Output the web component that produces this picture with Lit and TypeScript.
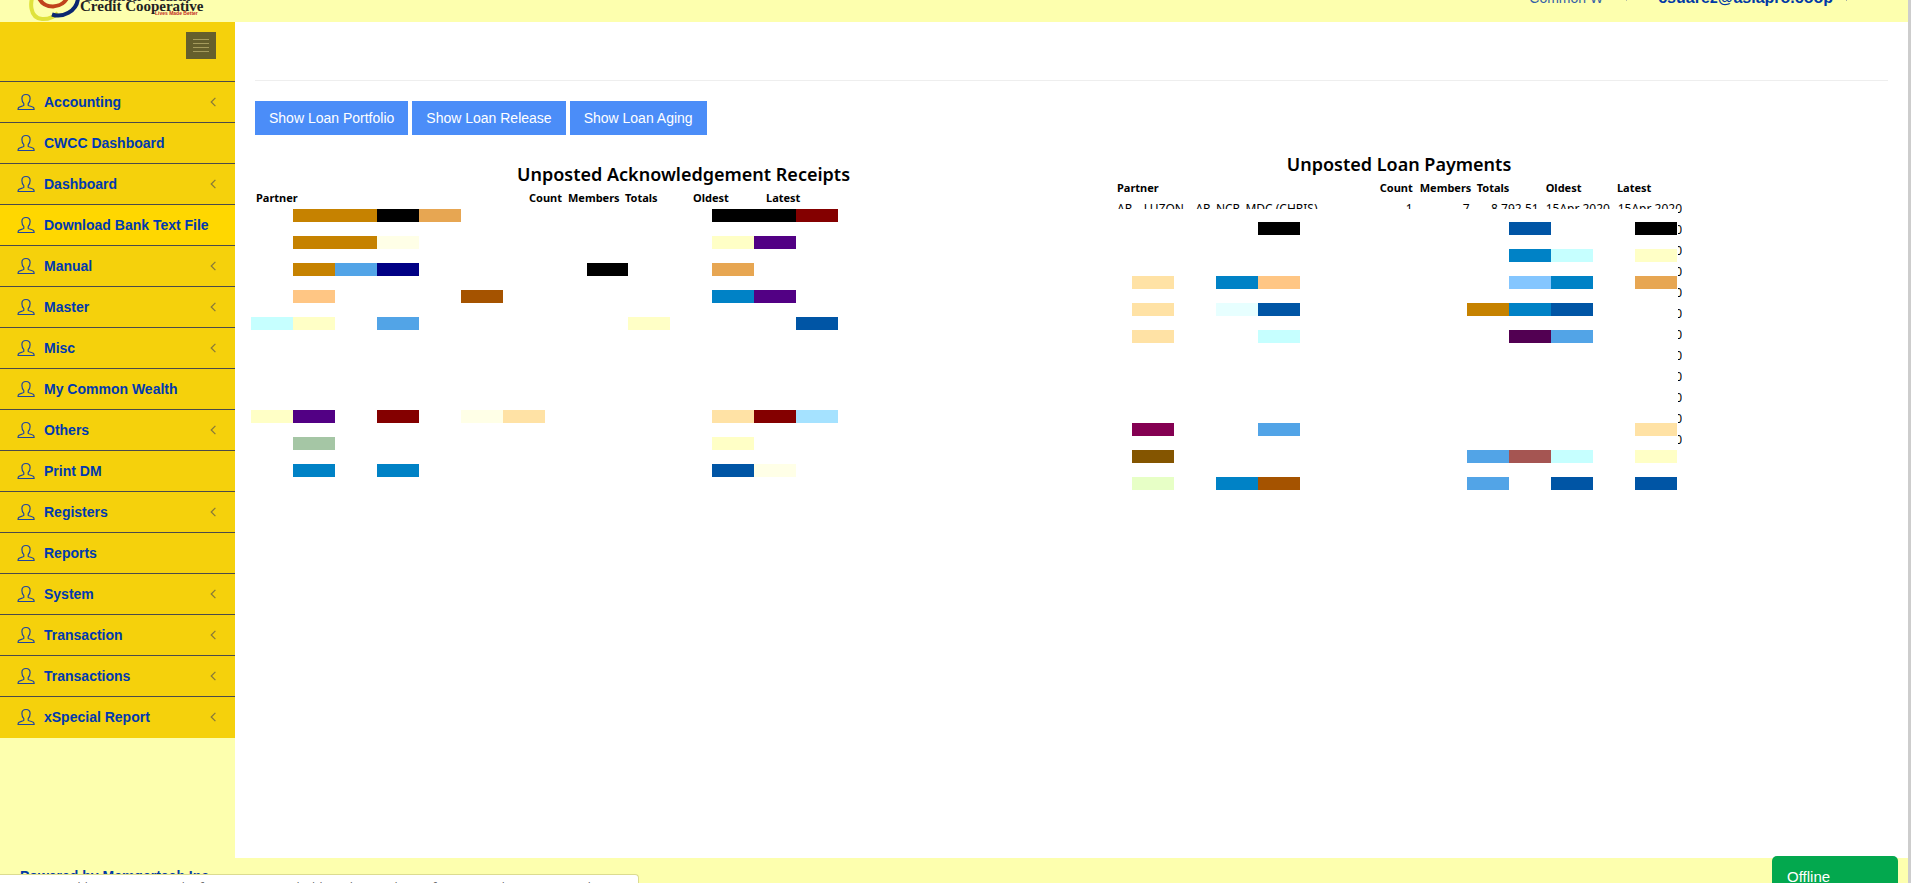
import { LitElement, html, svg, css } from "lit";
import { customElement } from "lit/decorators.js";
import { styleMap } from "lit/directives/style-map.js";

interface MenuEntry {
  label: string;
  nested?: boolean;
  active?: boolean;
}

const MENU: MenuEntry[] = [
  { label: "Accounting", nested: true },
  { label: "CWCC Dashboard" },
  { label: "Dashboard", nested: true },
  { label: "Download Bank Text File", active: true },
  { label: "Manual", nested: true },
  { label: "Master", nested: true },
  { label: "Misc", nested: true },
  { label: "My Common Wealth" },
  { label: "Others", nested: true },
  { label: "Print DM" },
  { label: "Registers", nested: true },
  { label: "Reports" },
  { label: "System", nested: true },
  { label: "Transaction", nested: true },
  { label: "Transactions", nested: true },
  { label: "xSpecial Report", nested: true },
];

// One block: [row, first column, colour, columns spanned]
type Block = [number, number, string, number?];

const RECEIPT_BLOCKS: Block[] = [
  [1, 2, "#c68200", 2], [1, 4, "#000000"], [1, 5, "#e7a652"], [1, 12, "#000000", 2], [1, 14, "#840000"],
  [2, 2, "#c68200", 2], [2, 4, "#ffffe7"], [2, 12, "#ffffc6"], [2, 13, "#520084"],
  [3, 2, "#c68200"], [3, 3, "#52a4e7"], [3, 4, "#000084"], [3, 9, "#000000"], [3, 12, "#e7a652"],
  [4, 2, "#ffc684"], [4, 6, "#a55300"], [4, 12, "#0082c6"], [4, 13, "#520084"],
  [5, 1, "#c6ffff"], [5, 2, "#ffffc6"], [5, 4, "#52a4e7"], [5, 10, "#ffffc6"], [5, 14, "#0055a5"],
  [7, 1, "#ffffc6"], [7, 2, "#520084"], [7, 4, "#840000"], [7, 6, "#ffffe7"], [7, 7, "#ffe2a5"],
  [7, 12, "#ffe2a5"], [7, 13, "#840000"], [7, 14, "#a5e2ff"],
  [8, 2, "#a5c6a5"], [8, 12, "#ffffc6"],
  [9, 2, "#0082c6"], [9, 4, "#0082c6"], [9, 12, "#0055a5"], [9, 13, "#ffffe7"],
];

const PAYMENT_BLOCKS: Block[] = [
  [1, 4, "#000000"], [1, 10, "#0055a5"], [1, 13, "#000000"],
  [2, 10, "#0082c6"], [2, 11, "#c6ffff"], [2, 13, "#ffffc6"],
  [3, 1, "#ffe2a5"], [3, 3, "#0082c6"], [3, 4, "#ffc684"], [3, 10, "#84c6ff"], [3, 11, "#0082c6"], [3, 13, "#e7a652"],
  [4, 1, "#ffe2a5"], [4, 3, "#e7ffff"], [4, 4, "#0055a5"], [4, 9, "#c68200"], [4, 10, "#0082c6"], [4, 11, "#0055a5"],
  [5, 1, "#ffe2a5"], [5, 4, "#c6ffff"], [5, 10, "#520052"], [5, 11, "#52a4e7"],
  [7, 1, "#840052"], [7, 4, "#52a4e7"], [7, 13, "#ffe2a5"],
  [8, 1, "#845500"], [8, 9, "#52a4e7"], [8, 10, "#a55552"], [8, 11, "#c6ffff"], [8, 13, "#ffffc6"],
  [9, 1, "#e7ffc6"], [9, 3, "#0082c6"], [9, 4, "#a55300"], [9, 9, "#52a4e7"], [9, 11, "#0055a5"], [9, 13, "#0055a5"],
];

const blocks = (list: Block[]) =>
  list.map(
    ([row, col, color, span = 1]) =>
      html`<i style=${styleMap({ gridArea: `${row} / ${col} / auto / span ${span}`, background: color })}></i>`
  );

const headRow = html`<tr>
  <th scope="col">Partner</th>
  <th scope="col">Count</th>
  <th scope="col">Members</th>
  <th scope="col">Totals</th>
  <th scope="col">Oldest</th>
  <th scope="col">Latest</th>
</tr>`;

@customElement("app-sidebar")
export class AppSidebar extends LitElement {
  static styles = css`
    :host {
      display: block;
      width: 235px;
      flex: none;
      font: 700 14px/20px "Liberation Sans", Arial, sans-serif;
    }
    .top {
      display: flex;
      justify-content: flex-end;
      padding: 10px 19px 22px 0;
      background: #f5d10c;
    }
    .toggle {
      width: 30px;
      height: 27px;
      padding: 0;
      border: 0;
      background: #655f2c;
      display: grid;
      place-items: center;
    }
    .list {
      list-style: none;
      margin: 0;
      padding: 0;
      border-bottom: 1px solid #f5d10c;
    }
    .link {
      display: flex;
      align-items: center;
      height: 40px;
      padding: 0 19px 0 17px;
      border-top: 1px solid #4a4a4a;
      background: #f5d10c;
      color: #0039b0;
      text-decoration: none;
    }
    .active {
      background: #ffd700;
    }
    .user {
      margin-right: 9px;
      flex: none;
    }
    .label {
      flex: 1;
      white-space: nowrap;
    }
  `;

  render() {
    return html`
      <div class="top">
        <button class="toggle" aria-label="Toggle menu">
          <svg width="16" height="13" viewBox="0 0 16 13" fill="#a59b5c">
            <path d="M0 0h16v1H0zM0 4h16v1H0zM0 8h16v1H0zM0 12h16v1H0z" />
          </svg>
        </button>
      </div>
      <nav>
        <ul class="list">
          ${MENU.map(
            (m) => html`<li>
              <a href="#" class="link ${m.active ? "active" : ""}">
                <svg class="user" width="18" height="18" viewBox="0 0 18 18" fill="none" stroke="#1f45a0" stroke-width="1.2">
                  <path d="M9 1.500C6.300 1.500 4.900 3 4.900 5.500C4.900 7.600 5.500 9.300 6.800 10.700V12.300C5.800 13.400 2.900 13.200 1.700 14.500C1.200 15 1.100 15.700 1.100 16.500H17.100C17.100 15.700 17 15 16.500 14.500C15.300 13.200 12.300 13.400 11.200 12.300V10.700C12.500 9.300 13.100 7.600 13.100 5.500C13.100 3 11.700 1.500 9 1.500Z" />
                </svg>
                <span class="label">${m.label}</span>
                ${m.nested
                  ? html`<svg width="6" height="10" viewBox="0 0 6 10" fill="none" stroke="#86783a" stroke-width="1.2">
                      <path d="M5.400.8L1.200 5L5.400 9.200" />
                    </svg>`
                  : ""}
              </a>
            </li>`
          )}
        </ul>
      </nav>
    `;
  }
}

@customElement("app-root")
export class AppRoot extends LitElement {
  static styles = css`
    :host {
      display: flex;
      flex-direction: column;
      position: relative;
      box-sizing: border-box;
      height: 100vh;
      overflow: hidden;
      border-right: 3px solid #cdcdcd;
      background: #fdffae;
      color: #000;
      font: 14px/20px "Liberation Sans", Arial, sans-serif;
    }
    .header {
      flex: none;
      display: flex;
      justify-content: space-between;
      align-items: center;
      height: 60px;
      margin-top: -38px;
      padding: 0 58px 0 25px;
    }
    .account {
      display: flex;
      align-items: center;
      padding-top: 11px;
      color: #0039a6;
    }
    .account a {
      display: flex;
      align-items: center;
      color: inherit;
      text-decoration: none;
    }
    .org {
      font-size: 14px;
      gap: 20px;
      margin-right: 28px;
      opacity: 0.8;
    }
    .mail {
      font-size: 16px;
      font-weight: 700;
      gap: 10px;
    }
    .body {
      flex: 1;
      display: flex;
      min-height: 0;
    }
    .main {
      flex: 1;
      min-width: 0;
      padding: 0 20px;
      background: #fff;
    }
    .rule {
      margin: 58px 0 20px;
      border: 0;
      border-top: 1px solid #eee;
    }
    .actions {
      display: flex;
      gap: 4px;
    }
    .btn {
      height: 34px;
      padding: 0 14px;
      border: 0;
      background: #4b8df8;
      color: #fff;
      font: inherit;
    }
    .reports {
      display: grid;
      grid-template-columns: minmax(0, 1fr) 772px;
      gap: 4px;
      font-family: "Noto Sans", "Open Sans", sans-serif;
      font-size: 12px;
    }
    .receipts {
      padding-top: 27px;
    }
    .payments {
      width: 566px;
      padding-top: 17px;
    }
    .title {
      margin: 0;
      font-size: 18px;
      line-height: 24px;
      font-weight: 600;
      text-align: center;
      white-space: nowrap;
    }
    .table {
      table-layout: fixed;
      border-collapse: collapse;
    }
    th {
      height: 20px;
      padding: 2px 1px 0;
      font-size: 11px;
      line-height: 20px;
      font-weight: 700;
      text-align: left;
      white-space: nowrap;
    }
    td {
      height: 21px;
      padding: 0 6px 0 1px;
      line-height: 20px;
      text-align: right;
      white-space: nowrap;
    }
    td:first-child {
      text-align: left;
    }
    td:last-child {
      padding-right: 0;
    }
    .cut td {
      clip-path: inset(0 0 10px 0);
    }
    .cut td:last-child {
      clip-path: polygon(0 0, 100% 0, 100% 100%, calc(100% - 4px) 100%, calc(100% - 4px) 11px, 0 11px);
    }
    .edge td {
      clip-path: inset(0 0 0 calc(100% - 4px));
    }
    .blocks {
      display: grid;
      grid-template-rows: repeat(5, 13px) 52px repeat(3, 13px);
      row-gap: 14px;
    }
    .receipts .blocks {
      grid-template-columns: repeat(8, 42px) 41px repeat(5, 42px);
      margin: 1px 0 0 -4px;
    }
    .stack {
      display: grid;
      align-items: start;
      justify-items: start;
    }
    .stack > * {
      grid-area: 1 / 1;
    }
    .stack .blocks {
      grid-template-columns: repeat(7, 42px) 41px repeat(5, 42px);
      margin: 46px 0 0 16px;
    }
    .footer {
      flex: none;
      height: 25px;
      padding: 8px 20px 0;
      box-sizing: border-box;
      color: #0039a6;
      font-weight: 700;
    }
    .status {
      position: absolute;
      left: 0;
      bottom: 0;
      width: 639px;
      height: 9px;
      box-sizing: border-box;
      overflow: hidden;
      padding: 4px 5px 0;
      border: solid #dcdc90;
      border-width: 1px 1px 0 0;
      border-radius: 0 4px 0 0;
      background: #fff;
      color: #666;
      font: 12px/18px "Open Sans", sans-serif;
      white-space: nowrap;
    }
    .chat {
      position: absolute;
      right: 10px;
      bottom: 0;
      width: 126px;
      height: 27px;
      overflow: hidden;
      padding: 11px 15px 0;
      border: 0;
      border-radius: 5px 5px 0 0;
      background: #03a84e;
      color: #fff;
      font: 15px/20px "Liberation Sans", Arial, sans-serif;
      text-align: left;
    }
  `;

  render() {
    const caret = svg`<path d="M.5 4.500L3.500 7.500L6.500 4.500" fill="none" stroke="#8a95a0" />`;
    return html`
      <header class="header">
        <svg width="180" height="60" viewBox="0 0 180 60" role="img" aria-label="Credit Cooperative">
          <g fill="none" stroke-width="4" transform="translate(0 38)">
            <path d="M11 -10C3 2 5 18 17 19C24 19.500 29 17 33 13" stroke="#dfe23c" />
            <path d="M13 -4C16 4 21 6.500 28 6.500C35 6 41 2 43 -4" stroke="#c0431c" />
            <path d="M27 14.500C37 18 52 12 53 -2" stroke="#0b2770" />
          </g>
          <text x="57" y="39" font-family="Liberation Serif" font-weight="700" font-size="15" fill="#333">Common Wealth</text>
          <text x="55" y="49" font-family="Liberation Serif" font-weight="700" font-size="15" fill="#222">Credit Cooperative</text>
          <text x="130" y="53" font-family="Liberation Sans" font-weight="700" font-size="5" fill="#c22a1c">Lives Made Better</text>
        </svg>
        <div class="account">
          <a class="org" href="#">Common W<svg width="7" height="9">${caret}</svg></a>
          <a class="mail" href="#">csuarez@asiapro.coop<svg width="7" height="9">${caret}</svg></a>
        </div>
      </header>
      <div class="body">
        <app-sidebar></app-sidebar>
        <main class="main">
          <hr class="rule" />
          <div class="actions">
            <button class="btn">Show Loan Portfolio</button>
            <button class="btn">Show Loan Release</button>
            <button class="btn">Show Loan Aging</button>
          </div>
          <div class="reports">
            <section class="receipts">
              <h2 class="title">Unposted Acknowledgement Receipts</h2>
              <table class="table">
                <colgroup>
                  ${[273, 39, 57, 68, 73, 66].map((w) => html`<col width=${w} />`)}
                </colgroup>
                <thead>${headRow}</thead>
              </table>
              <div class="blocks">${blocks(RECEIPT_BLOCKS)}</div>
            </section>
            <section class="payments">
              <h2 class="title">Unposted Loan Payments</h2>
              <div class="stack">
                <table class="table">
                  <colgroup>
                    ${[263, 40, 57, 69, 71, 66].map((w) => html`<col width=${w} />`)}
                  </colgroup>
                  <thead>${headRow}</thead>
                  <tbody>
                    <tr class="cut">
                      <td>AR _ LUZON _ AR_NCR_MDC (CHRIS)</td>
                      <td>1</td>
                      <td>7</td>
                      <td>8,792.51</td>
                      <td>15Apr 2020</td>
                      <td>15Apr 2020</td>
                    </tr>
                    ${Array.from({ length: 11 }, () => html`<tr class="edge"><td colspan="5"></td><td>0</td></tr>`)}
                  </tbody>
                </table>
                <div class="blocks">${blocks(PAYMENT_BLOCKS)}</div>
              </div>
            </section>
          </div>
        </main>
      </div>
      <footer class="footer">Powered by Memgertech Inc.</footer>
      <div class="status">commonwealthcoop.com/portal/information/main/dashboard.aspx?id=JztoCf5xQvUEV8Kla0EKtyum4PEykLAGEB</div>
      <button class="chat">Offline</button>
    `;
  }
}
